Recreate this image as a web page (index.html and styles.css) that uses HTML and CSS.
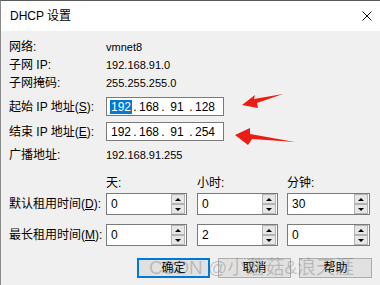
FILE: index.html
```html
<!DOCTYPE html>
<html lang="zh-CN">
<head>
    <meta charset="UTF-8">
    <title>DHCP 设置</title>
    <link rel="stylesheet" href="styles.css">
</head>
<body>
    <div class="dialog">
        <div class="titlebar">
            <span class="title">DHCP 设置</span>
            <svg class="close" width="10" height="10" viewBox="0 0 10 10">
                <path d="M0.5 0.5 L9.5 9.5 M9.5 0.5 L0.5 9.5" stroke="#111" stroke-width="1" fill="none"/>
            </svg>
        </div>

        <div class="content">
            <div class="row info"><span class="label">网络:</span><span class="value">vmnet8</span></div>
            <div class="row info"><span class="label">子网 IP:</span><span class="value">192.168.91.0</span></div>
            <div class="row info"><span class="label">子网掩码:</span><span class="value">255.255.255.0</span></div>

            <div class="row ip first">
                <span class="label">起始 IP 地址(<u>S</u>):</span>
                <div class="ipbox">
                    <span class="seg"><span class="sel">192</span></span><span class="dot">.</span>
                    <span class="seg">168</span><span class="dot">.</span>
                    <span class="seg">91</span><span class="dot">.</span>
                    <span class="seg">128</span>
                </div>
            </div>
            <div class="row ip second">
                <span class="label">结束 IP 地址(<u>E</u>):</span>
                <div class="ipbox">
                    <span class="seg">192</span><span class="dot">.</span>
                    <span class="seg">168</span><span class="dot">.</span>
                    <span class="seg">91</span><span class="dot">.</span>
                    <span class="seg">254</span>
                </div>
            </div>

            <div class="row info broadcast"><span class="label">广播地址:</span><span class="value">192.168.91.255</span></div>

            <div class="lease head">
                <span></span>
                <span class="col-title">天:</span>
                <span class="col-title">小时:</span>
                <span class="col-title">分钟:</span>
            </div>
            <div class="lease first">
                <span class="label">默认租用时间(<u>D</u>):</span>
                <div class="spin"><span class="num">0</span><div class="arrows"><span class="up"></span><span class="down"></span></div></div>
                <div class="spin"><span class="num">0</span><div class="arrows"><span class="up"></span><span class="down"></span></div></div>
                <div class="spin wide"><span class="num">30</span><div class="arrows"><span class="up"></span><span class="down"></span></div></div>
            </div>
            <div class="lease second">
                <span class="label">最长租用时间(<u>M</u>):</span>
                <div class="spin"><span class="num">0</span><div class="arrows"><span class="up"></span><span class="down"></span></div></div>
                <div class="spin"><span class="num">2</span><div class="arrows"><span class="up"></span><span class="down"></span></div></div>
                <div class="spin wide"><span class="num">0</span><div class="arrows"><span class="up"></span><span class="down"></span></div></div>
            </div>

            <div class="buttons">
                <button class="btn default">确定</button>
                <button class="btn">取消</button>
                <button class="btn">帮助</button>
            </div>
        </div>

        <!-- red arrows pasted over the dialog -->
        <svg class="marks" width="380" height="285" viewBox="0 0 380 285">
            <polygon points="242,105 255,95 254,99 283,94 257,103 258,108" fill="#ea1c14"/>
            <polygon points="235,135 250,128 250,134 295,142 252,139 248,145" fill="#ea1c14"/>
        </svg>

        <span class="watermark">CSDN @小蘑菇&amp;浪天涯</span>
    </div>
</body>
</html>
```

FILE: styles.css
```css
body {
    margin: 0;
    font-family: "Liberation Sans", "Noto Sans CJK SC", sans-serif;
    font-size: 12px;
    color: #000;
    background-color: #f0f0f0;
}

.dialog {
    position: relative;
    width: 380px;
    height: 285px;
    box-sizing: border-box;
    border-top: 1px solid #5a5a5a;
    border-left: 1px solid #8a8a8a;
    background-color: #f0f0f0;
    overflow: hidden;
}

.titlebar {
    height: 30px;
    background-color: #fff;
    display: flex;
    align-items: center;
    justify-content: space-between;
    padding: 0 8px 0 9px;
}

.title {
    font-size: 12px;
    line-height: 14px;
}

.close {
    display: block;
}

.content {
    padding: 7px 0 0 8px;
}

.row {
    display: flex;
    align-items: center;
}

.label {
    width: 97px;
    flex-shrink: 0;
    line-height: 16px;
    white-space: nowrap;
}

.info {
    height: 18px;
}

.value {
    font-size: 11px;
    line-height: 14px;
}

.ip {
    height: 19px;
}

.ip.first {
    margin-top: 5px;
}

.ip.second {
    margin-top: 6px;
}

.broadcast {
    margin-top: 5px;
}

.ipbox {
    width: 118px;
    height: 19px;
    box-sizing: border-box;
    border: 1px solid #7a7a7a;
    background-color: #fff;
    display: flex;
    align-items: center;
    padding-left: 3px;
    font-size: 12px;
}

.seg {
    width: 22px;
    text-align: center;
    line-height: 14px;
}

.sel {
    background-color: #0078d7;
    color: #fff;
    padding: 0 1px;
}

.dot {
    width: 6px;
    text-align: center;
    line-height: 14px;
}

.lease {
    display: grid;
    grid-template-columns: 97px 91px 90px 83px;
    align-items: center;
}

.lease.head {
    margin-top: 10px;
    height: 18px;
}

.col-title {
    line-height: 16px;
}

.lease.first {
    margin-top: 1px;
}

.lease.second {
    margin-top: 9px;
}

.spin {
    width: 81px;
    height: 22px;
    box-sizing: border-box;
    border: 1px solid #7a7a7a;
    background-color: #fff;
    display: flex;
    justify-content: space-between;
    align-items: center;
}

.spin.wide {
    width: 83px;
}

.num {
    padding-left: 4px;
    line-height: 14px;
}

.arrows {
    display: flex;
    flex-direction: column;
    gap: 0;
    margin-right: 1px;
}

.arrows span {
    width: 14px;
    height: 10px;
    box-sizing: border-box;
    border: 1px solid #b4b4b4;
    background-color: #e6e6e6;
    display: flex;
    align-items: center;
    justify-content: center;
}

.arrows span::after {
    content: "";
    width: 0;
    height: 0;
    border-left: 3px solid transparent;
    border-right: 3px solid transparent;
}

.up::after {
    border-bottom: 3px solid #000;
}

.down::after {
    border-top: 3px solid #000;
}

.buttons {
    display: flex;
    justify-content: flex-end;
    gap: 8px;
    margin-top: 12px;
    padding-right: 8px;
}

.btn {
    width: 73px;
    height: 20px;
    box-sizing: border-box;
    border: 1px solid #adadad;
    background-color: #e1e1e1;
    font-family: "Liberation Sans", "Noto Sans CJK SC", sans-serif;
    font-size: 12px;
    line-height: 14px;
    padding: 0;
    color: #000;
}

.btn.default {
    border: 2px solid #0078d7;
}

.marks {
    position: absolute;
    left: -1px;
    top: -1px;
}

.watermark {
    position: absolute;
    left: 148px;
    top: 256px;
    font-size: 19px;
    line-height: 22px;
    color: rgba(110, 110, 110, 0.35);
    white-space: nowrap;
    pointer-events: none;
}
```
